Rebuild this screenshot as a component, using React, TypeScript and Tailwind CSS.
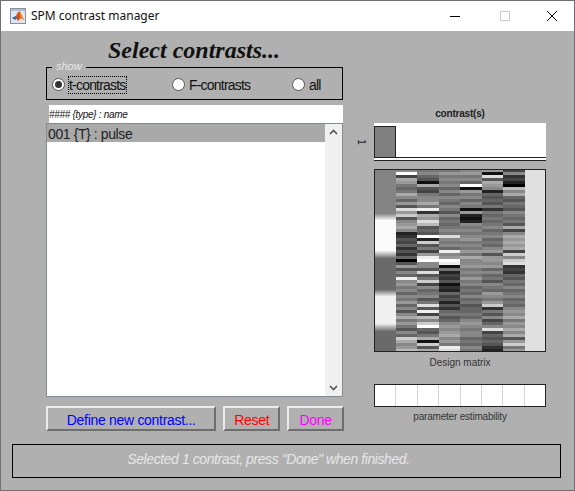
// gray level per 3px row, one string per regressor column
const STRIPES = [
  "8f4a9767a8695d9c589a8235463536059586e897868796858a797586ca89b",
  "78651a54788a7e3a9db565f2c5749ef885d57c4867857d5e4b8cf657a1c5a",
  "7978786868768758676787d8786e89fe172435132645253675689 89a897ed".replace(" ", ""),
  "89786f19786871921287878978797a88978797867686756676" + "89878867687",
  "91d5a982656573767678678676895998968675876987 9c3758468d4656532".replace(" ", ""),
  "483420b8a6576587675a48a9a9a4c8cd34365768678676898a798a8a59c79",
];

function stripe(col: number, row: number) {
  const s = STRIPES[col];
  return parseInt(s[row % s.length], 16) * 17;
}

// first column: two pulse blocks on mid gray
function pulse(y: number) {
  const bump = (a: number, b: number, v: number) => {
    if (y < a - 7 || y > b + 8) return 0;
    if (y < a) return ((y - a + 7) / 7) * v;
    if (y > b) return ((b + 8 - y) / 8) * v;
    return v;
  };
  const base = y < 240 ? 132 : 106;
  return Math.round(base + bump(220, 250, y < 240 ? 118 : 144) + bump(296, 323, 134));
}

function DesignMatrix() {
  const edges = [1, 22, 43, 65, 86, 108, 129, 151];
  const rows = Array.from({ length: 61 }, (_, i) => i);
  return (
    <svg width="172" height="183" shapeRendering="crispEdges" className="block">
      {Array.from({ length: 183 }, (_, i) => {
        const v = pulse(169 + i);
        return <rect key={i} x="1" y={i} width="21" height="1" fill={`rgb(${v},${v},${v})`} />;
      })}
      {STRIPES.map((_, c) =>
        rows.map((r) => {
          const v = stripe(c, r);
          return (
            <rect
              key={`${c}-${r}`}
              x={edges[c + 1]}
              y={r * 3}
              width={edges[c + 2] - edges[c + 1]}
              height="3"
              fill={`rgb(${v},${v},${v})`}
            />
          );
        })
      )}
      <rect x="151" y="0" width="20" height="183" fill="#e0e0e0" />
      <rect x="0.5" y="0.5" width="171" height="182" fill="none" stroke="#222" />
    </svg>
  );
}

function MatlabIcon() {
  return (
    <svg width="16" height="16" viewBox="0 0 16 16" className="shrink-0">
      <rect x="0.5" y="0.5" width="15" height="15" fill="#dfe6ee" stroke="#8a9099" />
      <rect x="1" y="1" width="14" height="2" fill="#a9c0da" />
      <path d="M2 10 L6 8 L8 4 L10 3.5 L14 12 L11 10 L8 13 L6 10 Z" fill="#d9501e" />
      <path d="M2 10 L6 8 L7 10 L5 12 Z" fill="#2f6fb0" />
      <path d="M9 4 L10 3.5 L14 12 L11 10 Z" fill="#f08a24" />
    </svg>
  );
}

function Radio({ label, checked = false, focus = false }: { label: string; checked?: boolean; focus?: boolean }) {
  return (
    <div className="flex items-center gap-[4px]">
      <span className="flex h-[13px] w-[13px] items-center justify-center rounded-full border border-[#555] bg-white">
        {checked && <span className="h-[7px] w-[7px] rounded-full bg-[#333]" />}
      </span>
      <span className={`text-[14px] leading-[16px] tracking-[-0.8px] text-[#111] ${focus ? "outline-1 outline-dotted outline-black" : ""}`}>
        {label}
      </span>
    </div>
  );
}

function Btn({ label, color, width }: { label: string; color: string; width: string }) {
  return (
    <button className={`h-[25px] ${width} border-2 border-t-[#ececec] border-l-[#ececec] border-r-[#6e6e6e] border-b-[#6e6e6e] bg-[#b0b0b0] pt-[2px] text-[14px] leading-none tracking-[-0.3px] ${color}`}>
      {label}
    </button>
  );
}

export default function App() {
  return (
    <div className="h-[491px] w-[575px] overflow-hidden bg-white font-['Liberation_Sans',sans-serif]">
      <div className="flex h-full flex-col border border-[#707070] bg-[#b0b0b0]">
        <div className="flex h-[30px] shrink-0 items-center bg-white pl-[9px]">
          <MatlabIcon />
          <span className="ml-[5px] font-['Noto_Sans',sans-serif] text-[12px] text-[#111]">SPM contrast manager</span>
          <div className="ml-auto flex items-center">
            <svg width="12" height="12" className="mr-[39px]"><path d="M1 6.5H11" stroke="#000" /></svg>
            <svg width="10" height="10" className="mr-[36px]"><rect x="0.5" y="0.5" width="9" height="9" fill="none" stroke="#ccc" /></svg>
            <svg width="12" height="12" className="mr-[16px]"><path d="M1 1L11 11M11 1L1 11" stroke="#000" /></svg>
          </div>
        </div>

        <div className="flex flex-1 pl-[45px]">
          <div className="w-[298px]">
            <h1 className="pl-[62px] pt-[6px] font-['Liberation_Serif',serif] text-[24px] leading-[27px] font-bold italic text-[#111]">
              Select contrasts...
            </h1>
            <fieldset className="relative mt-[3px] flex h-[33px] w-[297px] items-center border border-black pt-[2px] pl-[5px]">
              <span className="absolute -top-[8px] left-[5px] bg-[#b0b0b0] px-[4px] text-[11px] leading-[13px] italic text-[#e8e8e8]">
                show
              </span>
              <div className="w-[120px]"><Radio label="t-contrasts" checked focus /></div>
              <div className="w-[120px]"><Radio label="F-contrasts" /></div>
              <Radio label="all" />
            </fieldset>
            <div className="mt-[5px] ml-[3px] flex h-[18px] w-[294px] items-center bg-white text-[10px] italic tracking-[-0.3px] text-[#111]">
              #### {"{type}"} : name
            </div>
            <div className="flex h-[274px] w-[297px] border border-[#858a95] bg-white">
              <div className="h-[18px] flex-1 bg-[#a9a9a9] pl-[1px] text-[14px] leading-[20px] tracking-[-0.4px] text-[#222]">
                001 {"{T}"} : pulse
              </div>
              <div className="flex w-[17px] flex-col items-center justify-between bg-[#f0f0f0] py-[5px]">
                <svg width="9" height="6"><path d="M1 5L4.5 1.5L8 5" fill="none" stroke="#555" strokeWidth="1.6" /></svg>
                <svg width="9" height="6"><path d="M1 1L4.5 4.5L8 1" fill="none" stroke="#555" strokeWidth="1.6" /></svg>
              </div>
            </div>
            <div className="mt-[9px] flex w-[298px] gap-[7px]">
              <Btn label="Define new contrast..." color="text-[#0000ff]" width="w-[171px]" />
              <Btn label="Reset" color="text-[#ff0000]" width="w-[57px]" />
              <Btn label="Done" color="text-[#ff00ff]" width="w-[57px]" />
            </div>
          </div>

          <div className="ml-[30px] w-[172px] pt-[76px]">
            <div className="h-[16px] text-center text-[10px] leading-[14px] font-bold tracking-[-0.2px] text-[#222]">contrast(s)</div>
            <div className="relative h-[38px] border-b border-[#222] bg-white">
              <div className="absolute top-[3px] left-0 h-[32px] w-[22px] border border-[#222] bg-[#808080]" />
              <div className="absolute right-0 bottom-[2px] left-0 h-px bg-[#222]" />
              <span className="absolute top-[13px] -left-[16px] rotate-90 text-[10px] leading-[12px] text-[#222]">1</span>
            </div>
            <div className="mt-[8px]"><DesignMatrix /></div>
            <div className="mt-[4px] text-center text-[10px] leading-[14px] text-[#333]">Design matrix</div>
            <div className="mt-[14px] flex h-[23px] border border-[#222] bg-white">
              {[0, 1, 2, 3, 4, 5, 6, 7].map((i) => (
                <div key={i} className="flex-1 border-r border-[#d4d4d4] last:border-r-0" />
              ))}
            </div>
            <div className="mt-[3px] text-center text-[10px] leading-[14px] tracking-[-0.2px] text-[#333]">parameter estimability</div>
          </div>
        </div>

        <div className="mb-[12px] ml-[11px] flex h-[34px] w-[549px] shrink-0 items-center justify-center border border-black pr-[36px] pb-[3px] text-[14px] tracking-[-0.42px] italic text-[#e6e6e6]">
          Selected 1 contrast, press "Done" when finished.
        </div>
      </div>
    </div>
  );
}
